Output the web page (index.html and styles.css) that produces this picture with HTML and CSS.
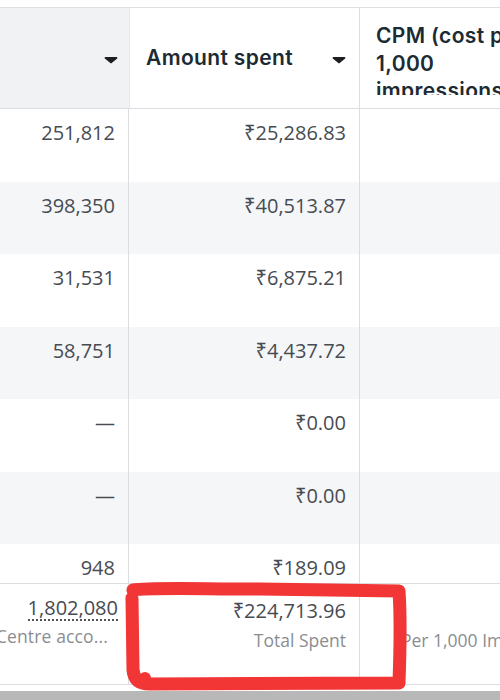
FILE: index.html
```html
<html>
<head>
  <title>Ads report</title>
  <link rel="stylesheet" href="styles.css">
</head>
<body>
  <div class="sheet">
    <div class="table">
      <div class="row head">
        <div class="cell c1 sorted">
          <svg class="caret" width="14" height="8" viewBox="0 0 14 8"><path d="M1.5 1h11c.8 0 1.2.9.7 1.5L7.7 7.1c-.4.4-1 .4-1.4 0L.8 2.5C.3 1.9.7 1 1.5 1z"/></svg>
        </div>
        <div class="cell c2">
          <span class="htitle">Amount spent</span>
          <svg class="caret" width="14" height="8" viewBox="0 0 14 8"><path d="M1.5 1h11c.8 0 1.2.9.7 1.5L7.7 7.1c-.4.4-1 .4-1.4 0L.8 2.5C.3 1.9.7 1 1.5 1z"/></svg>
        </div>
        <div class="cell c3">
          <span class="htitle wrap">CPM (cost per 1,000 impressions)</span>
        </div>
      </div>

      <div class="body">
        <div class="row"><div class="cell c1">251,812</div><div class="cell c2">₹25,286.83</div><div class="cell c3"></div></div>
        <div class="row alt"><div class="cell c1">398,350</div><div class="cell c2">₹40,513.87</div><div class="cell c3"></div></div>
        <div class="row"><div class="cell c1">31,531</div><div class="cell c2">₹6,875.21</div><div class="cell c3"></div></div>
        <div class="row alt"><div class="cell c1">58,751</div><div class="cell c2">₹4,437.72</div><div class="cell c3"></div></div>
        <div class="row"><div class="cell c1">—</div><div class="cell c2">₹0.00</div><div class="cell c3"></div></div>
        <div class="row alt"><div class="cell c1">—</div><div class="cell c2">₹0.00</div><div class="cell c3"></div></div>
        <div class="row"><div class="cell c1">948</div><div class="cell c2">₹189.09</div><div class="cell c3"></div></div>
      </div>

      <div class="row foot">
        <div class="cell c1">
          <div class="total"><span class="dotted">1,802,080</span></div>
          <div class="label trunc"><span>Accounts Centre acco...</span></div>
        </div>
        <div class="cell c2">
          <div class="total">₹224,713.96</div>
          <div class="label">Total Spent</div>
        </div>
        <div class="cell c3">
          <div class="total">&nbsp;</div>
          <div class="label">Per 1,000 Impressions</div>
        </div>
      </div>
    </div>
    <div class="gap"></div>
    <div class="scrollbar"></div>
  </div>

  <!-- hand drawn highlight over the total -->
  <svg class="marker" width="500" height="700" viewBox="0 0 500 700">
    <path d="M133 590 C150 587 200 589 260 589 L399 591 C401 620 400 655 399 683 L150 684 C140 684 134 680 133 670 L132 598" />
    <circle cx="145" cy="678" r="6" />
  </svg>
</body>
</html>
```

FILE: styles.css
```css
body {
  margin: 0;
  background: #fff;
  font-family: "Open Sans", "Noto Sans", sans-serif;
  color: #474b52;
  position: relative;
  overflow: hidden;
}

.sheet {
  width: 500px;
  height: 700px;
  display: flex;
  flex-direction: column;
  overflow: hidden;
}

.table {
  margin-top: 7px;
  margin-left: -72px;
  border-top: 1px solid #dcdfe3;
  display: flex;
  flex-direction: column;
}

.row {
  display: flex;
  background: #fff;
}

.row.alt {
  background: #f5f6f7;
}

.cell {
  box-sizing: border-box;
  flex: none;
  border-right: 1px solid #dadde1;
  text-align: right;
  font-size: 20px;
  line-height: 28px;
  padding: 10px 13px 0 16px;
  white-space: nowrap;
  overflow: hidden;
}

.c1 { width: 201px; }
.c2 { width: 231px; }
.c3 { width: 240px; border-right: none; }

.head {
  height: 100px;
  border-bottom: 1px solid #dadde1;
}

.head .cell {
  display: flex;
  align-items: center;
  justify-content: flex-end;
  padding-top: 0;
  font-family: Inter, "Noto Sans", sans-serif;
  font-size: 21px;
  letter-spacing: 0.35px;
  font-weight: 600;
  color: #1c2b33;
}

.head .c1 {
  border-right: none;
  padding-right: 11px;
}

.head .c2 {
  justify-content: space-between;
  border-left: 1px solid #e6e8eb;
}

.head .c3 {
  align-items: flex-start;
  justify-content: flex-start;
  text-align: left;
  padding-top: 14px;
}

.sorted {
  background: #f1f2f4;
}

.caret {
  fill: #1c1e21;
  margin-top: 3px;
}

.htitle.wrap {
  white-space: normal;
  width: 160px;
  height: 73px;
  overflow: hidden;
  line-height: 27.5px;
}

.body {
  height: 474px;
  overflow: hidden;
}

.body .row {
  height: 72.5px;
}

.foot {
  height: 100px;
  border-top: 1px solid #dadde1;
  border-bottom: 1px solid #dadde1;
}

.foot .cell {
  padding-top: 13px;
}

.foot .c3 {
  text-align: left;
  padding-left: 41px;
}

.total {
  line-height: 28px;
}

.dotted {
  display: inline-block;
  border-bottom: 2px dotted #555;
  line-height: 22px;
  margin-right: -3px;
}

.label {
  font-size: 17.5px;
  line-height: 24px;
  margin-top: 3px;
  color: #8a8d91;
}

.label.trunc {
  display: flex;
  justify-content: flex-end;
  margin-right: 7px;
  letter-spacing: 0.15px;
}

.label.trunc span {
  flex: none;
}

.gap {
  height: 6px;
}

.scrollbar {
  height: 10px;
  background: #b8b8b8;
}

.marker {
  position: absolute;
  left: 0;
  top: 0;
  fill: none;
}

.marker path {
  stroke: #f23535;
  stroke-width: 13;
  stroke-linecap: round;
  stroke-linejoin: round;
}

.marker circle {
  fill: #f23535;
}
```
